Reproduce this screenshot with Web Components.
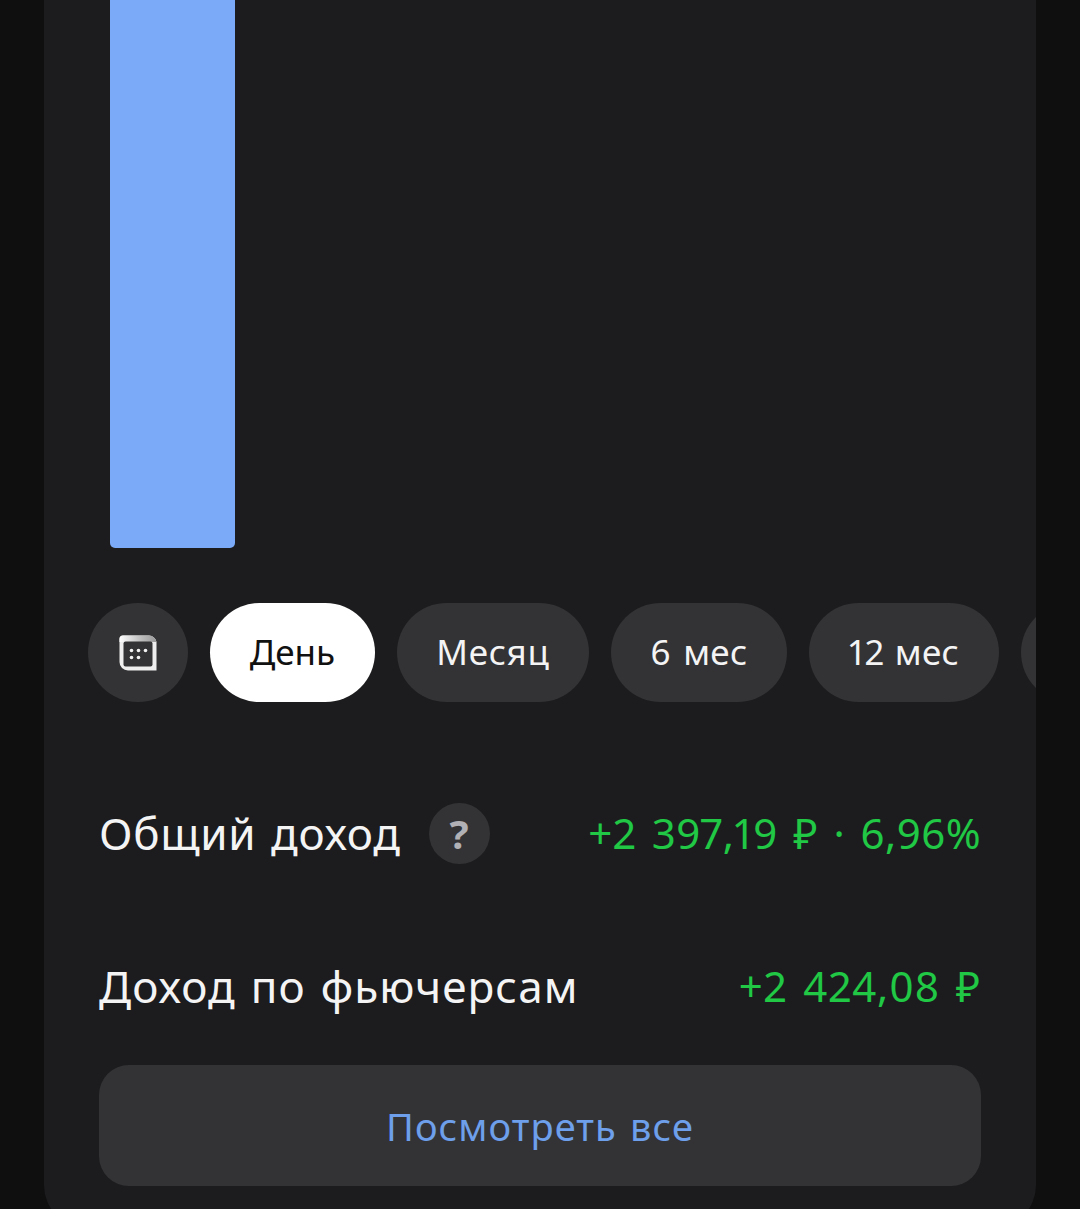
<!DOCTYPE html>
<html lang="ru"><head><meta charset="utf-8"><style>
html,body{margin:0;padding:0;background:#0f0f10;height:1209px;overflow:hidden}
body{font-family:"Noto Sans",sans-serif}
</style></head><body>
<income-card>
  <bar-chart slot="chart"></bar-chart>
  <period-chips slot="chips"></period-chips>
  <stat-row label="Общий доход" value="+2 397,19 ₽ · 6,96%" help style="margin-top:101px;--ls:.7px;--ws:2.6px;--vs:.45px;--up:2px"></stat-row>
  <stat-row label="Доход по фьючерсам" value="+2 424,08 ₽" style="margin-top:93px;--ls:1.1px;--ws:2.4px;--vs:.8px;--up:3px"></stat-row>
  <wide-button>Посмотреть все</wide-button>
</income-card>
<script>
function def(name,html,extra){customElements.define(name,class extends HTMLElement{
  constructor(){super();this.attachShadow({mode:'open'}).innerHTML=html;}
  connectedCallback(){extra&&extra.call(this);}
});}
def('income-card',`<style>
:host{display:block;margin:0 44px;width:992px;height:1229px;box-sizing:border-box;background:#1c1c1e;border-radius:0 0 44px 44px;overflow:hidden}
.in{padding:0 55px}
</style><slot name="chart"></slot><slot name="chips"></slot><div class="in"><slot></slot></div>`);
def('bar-chart',`<style>
:host{display:block;height:548px;padding-left:66px}
div{width:125px;height:100%;background:#7aaaf8;border-radius:0 0 5px 5px}
</style><div></div>`);
def('period-chips',`<style>
:host{display:flex;gap:22px;margin-top:55px;padding-left:44px;height:99px;overflow:hidden;font:400 35px/98px "Noto Sans",sans-serif;color:#f4f4f5;font-variant-numeric:proportional-nums}
span{flex:none;height:99px;background:#333335;border-radius:50px;box-sizing:border-box;text-align:center}
.cal{width:100px;display:flex;align-items:center;justify-content:center}
.on{background:#fff;color:#111}
</style>
<span class="cal"><svg width="38" height="36" viewBox="0 0 38 36"><defs><linearGradient id="g" x1="0" y1="0" x2="1" y2="0"><stop offset="0" stop-color="#fff"/><stop offset=".6" stop-color="#bbb"/><stop offset="1" stop-color="#999"/></linearGradient></defs><path d="M4 .5H30Q36 1 37.500 7V35.500H9A8.500 8.500 0 0 1 .5 27V4A3.500 3.500 0 0 1 4 .5Z" fill="#eee"/><path d="M4 .5H30Q36 1 37.500 7H.5V4A3.500 3.500 0 0 1 4 .5Z" fill="url(#g)"/><rect x="4.500" y="6.500" width="29" height="25" rx="2" fill="#333335"/><g fill="#f4f4f5"><circle cx="12.500" cy="15.500" r="1.800"/><circle cx="19.500" cy="15.500" r="1.800"/><circle cx="26.500" cy="15.500" r="1.800"/><circle cx="12.500" cy="22.500" r="1.800"/><circle cx="19.500" cy="22.500" r="1.800"/></g></svg></span>
<span class="on" style="width:165px">День</span><span style="width:192px;letter-spacing:.8px">Месяц</span><span style="width:176px;word-spacing:3px;letter-spacing:.3px">6 мес</span><span style="width:190px;word-spacing:1px;letter-spacing:.3px">12 мес</span><span style="width:120px"></span>`);
customElements.define('stat-row',class extends HTMLElement{
  constructor(){super();this.attachShadow({mode:'open'});}
  connectedCallback(){this.shadowRoot.innerHTML=`<style>
:host{display:flex;align-items:center;height:61px;font:400 44px/60px "Noto Sans",sans-serif;color:#f4f4f5}
.l{letter-spacing:var(--ls);word-spacing:var(--ws);margin-bottom:var(--up)}
.h{width:61px;height:61px;border-radius:50%;background:#333335;color:#b0b0b5;margin-left:28px;font:700 40px/61px "Noto Sans",sans-serif;text-align:center}
.v{margin-left:auto;margin-bottom:var(--up);font-size:42px;color:#20c845;letter-spacing:var(--vs);word-spacing:4px;white-space:nowrap;font-variant-numeric:proportional-nums}
</style><span class="l">${this.getAttribute('label')}</span>${this.hasAttribute('help')?'<span class="h">?</span>':''}<span class="v">${this.getAttribute('value')}</span>`;}
});
def('wide-button',`<style>
:host{display:block;margin-top:47px;height:121px;border-radius:30px;background:#333335;color:#6d9fea;text-align:center;font:400 38px/123px "Noto Sans",sans-serif;letter-spacing:1.05px;word-spacing:2.3px}
</style><slot></slot>`);
</script>
</body></html>
